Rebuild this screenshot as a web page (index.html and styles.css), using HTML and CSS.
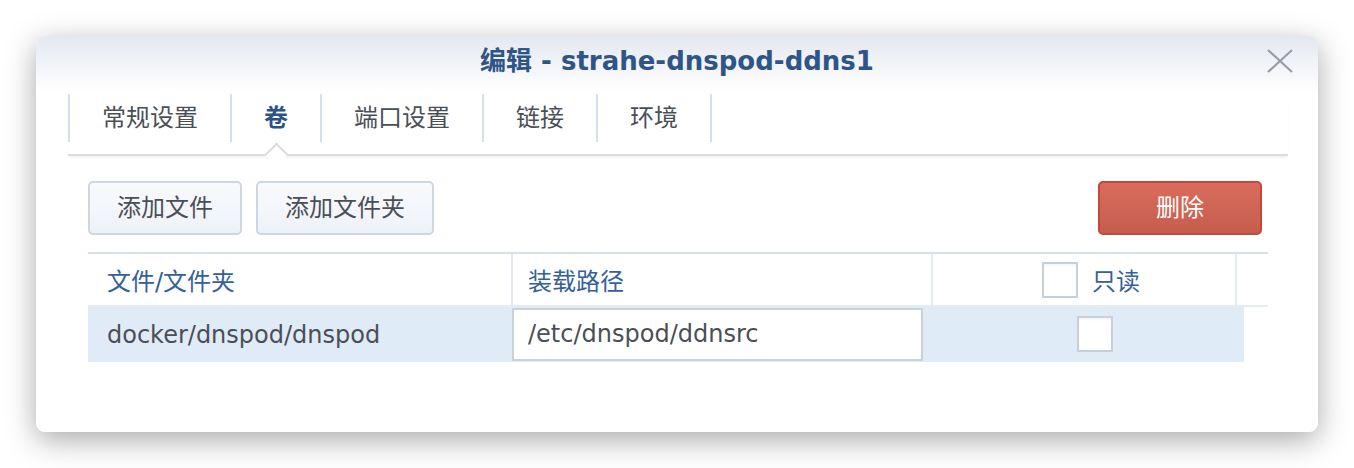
FILE: index.html
```html
<!DOCTYPE html>
<html lang="zh-CN">
<head>
<meta charset="utf-8">
<title>编辑 - strahe-dnspod-ddns1</title>
<link rel="stylesheet" href="styles.css">
</head>
<body>
<div class="dialog">
  <div class="titlebar">
    <div class="title">编辑 - strahe-dnspod-ddns1</div>
    <div class="close">
      <svg width="26" height="24" viewBox="0 0 26 24"><path d="M1 1 L25 23 M25 1 L1 23" stroke="#9a9ea4" stroke-width="2.2" fill="none"/></svg>
    </div>
  </div>
  <div class="tabbar">
    <div class="tabs">
      <div class="tab">常规设置</div>
      <div class="tab active">卷<span class="notch"></span></div>
      <div class="tab">端口设置</div>
      <div class="tab">链接</div>
      <div class="tab last">环境</div>
    </div>
  </div>
  <div class="content">
    <div class="toolbar">
      <div class="btn">添加文件</div>
      <div class="btn">添加文件夹</div>
      <div class="spacer"></div>
      <div class="btn danger">删除</div>
    </div>
    <div class="grid">
      <div class="ghead">
        <div class="hc c1">文件/文件夹</div>
        <div class="hc c2">装载路径</div>
        <div class="hc c3"><span class="cb"></span><span>只读</span></div>
        <div class="hc c4"></div>
      </div>
      <div class="grow">
        <div class="bc b1">docker/dnspod/dnspod</div>
        <div class="bc b2"><div class="input">/etc/dnspod/ddnsrc</div></div>
        <div class="bc b3"><span class="cb"></span></div>
      </div>
    </div>
  </div>
</div>
</body>
</html>
```
FILE: styles.css
```css
* { box-sizing: border-box; }
html, body { margin: 0; padding: 0; background: #ffffff; }
body {
  font-family: "DejaVu Sans", "Noto Sans CJK SC", sans-serif;
  font-size: 24px;
  color: #4a4f57;
  padding: 36px 36px 0 36px;
  min-height: 468px;
}
.dialog {
  position: relative;
  width: 1282px;
  height: 396px;
  border-radius: 9px;
  background: linear-gradient(#e3e8f0 0px, #ffffff 56px);
  box-shadow: 0 8px 30px rgba(0, 0, 0, 0.34);
}
.titlebar {
  height: 58px;
  display: flex;
  justify-content: center;
}
.title {
  line-height: 50px;
  font-size: 26px;
  font-weight: bold;
  color: #2f5587;
}
.close {
  position: absolute;
  top: 13px;
  right: 25px;
  width: 26px;
  height: 24px;
}
.close svg { display: block; }
.tabbar {
  margin: 0 30px 0 32px;
  height: 62px;
  border-bottom: 2px solid #d8dbdf;
  box-shadow: 0 3px 3px -1px rgba(0, 0, 0, 0.06);
}
.tabs {
  display: flex;
  height: 48px;
}
.tab {
  position: relative;
  height: 48px;
  line-height: 48px;
  padding: 0 32px;
  border-left: 2px solid #d6e0eb;
  color: #4a4f57;
  white-space: nowrap;
}
.tab.last { border-right: 2px solid #d6e0eb; }
.tab.active {
  color: #2d5289;
  font-weight: bold;
}
.notch {
  position: absolute;
  left: 50%;
  top: 52px;
  width: 17px;
  height: 17px;
  margin-left: -8px;
  background: #ffffff;
  border-top: 2px solid #d8dbdf;
  border-left: 2px solid #d8dbdf;
  transform: rotate(45deg);
}
.content {
  padding: 25px 56px 0 52px;
}
.toolbar {
  display: flex;
  gap: 14px;
  height: 54px;
}
.spacer { flex: 1; }
.btn {
  height: 54px;
  line-height: 50px;
  padding: 0 27px;
  border: 2px solid #cdd6e1;
  border-radius: 5px;
  background: linear-gradient(#f8fafd, #eef2f8);
  color: #4a4f57;
  white-space: nowrap;
}
.btn.danger {
  width: 164px;
  text-align: center;
  border-color: #c4473c;
  background: linear-gradient(#d96c5d, #c55d4d);
  color: #ffffff;
}
.grid {
  margin-top: 17px;
  margin-right: -6px;
}
.ghead {
  display: grid;
  grid-template-columns: 423px 420px 304px 33px;
  height: 55px;
  border-top: 2px solid #d7e0eb;
  border-bottom: 2px solid #e4ebf3;
}
.hc {
  display: flex;
  align-items: center;
  color: #34609a;
  height: 51px;
}
.c1 { padding-left: 19px; }
.c2 { padding-left: 15px; border-left: 2px solid #e3eaf2; }
.c3 { justify-content: center; gap: 14px; border-left: 2px solid #e3eaf2; padding-left: 14px; }
.c4 { border-left: 2px solid #e3eaf2; }
.grow {
  display: grid;
  grid-template-columns: 423px 420px 313px;
  width: 1156px;
  height: 55px;
  background: #e0ebf8;
}
.bc {
  display: flex;
  align-items: center;
}
.b1 { padding-left: 19px; color: #4a4f57; }
.b2 { padding: 0 8px 1px 1px; }
.input {
  width: 100%;
  height: 53px;
  line-height: 49px;
  padding-left: 14px;
  background: #ffffff;
  border: 2px solid #c9d1db;
  color: #4a4f57;
}
.b3 { justify-content: center; padding-left: 14px; padding-bottom: 2px; }
.cb {
  display: inline-block;
  width: 36px;
  height: 36px;
  background: #ffffff;
  border: 2px solid #c7cfda;
  box-shadow: inset 0 2px 2px rgba(0,0,0,0.04);
}
```
